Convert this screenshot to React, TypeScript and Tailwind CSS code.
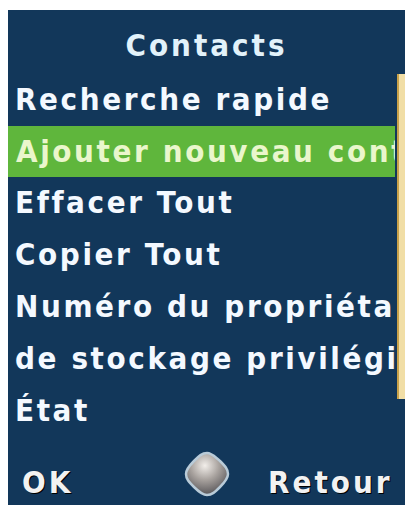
const items = [
  'Recherche rapide',
  'Ajouter nouveau contact',
  'Effacer Tout',
  'Copier Tout',
  'Numéro du propriétaire',
  'de stockage privilégié',
  'État',
];

function NavBall() {
  return (
    <svg width="46" height="46" viewBox="0 0 46 46">
      <defs>
        <radialGradient id="ball" cx="0.45" cy="0.3" r="0.75">
          <stop offset="0" stopColor="#f2eeea" />
          <stop offset="0.45" stopColor="#a8a29e" />
          <stop offset="1" stopColor="#4e4c50" />
        </radialGradient>
      </defs>
      <path
        d="M23 2 C28 2 31 6 36 10 C41 15 44 18 44 23 C44 28 40 32 36 36 C31 41 28 44 23 44 C18 44 14 40 10 36 C5 31 2 28 2 23 C2 18 6 14 10 10 C15 5 18 2 23 2 Z"
        fill="url(#ball)"
        stroke="#b9cbd8"
        strokeWidth="2.5"
      />
    </svg>
  );
}

export default function App() {
  return (
    <div className="w-[409px] h-[510px] bg-white pt-[10px] pl-[8px] pr-[4px] pb-[5px] font-['DejaVu_Sans_Condensed','DejaVu_Sans',sans-serif] font-bold">
      <div className="h-full bg-[#12375a] flex flex-col">
        {/* titre */}
        <div className="h-[65px] pt-[6px] flex items-center justify-center text-[31px] tracking-[3px] text-[#e2f2fa]">
          Contacts
        </div>
        <div className="flex">
          <div className="flex-1 min-w-0 overflow-hidden">
            {items.map((t, i) => (
              <div
                key={t}
                className={
                  i === 1
                    ? 'h-[51px] flex items-center pl-[8px] whitespace-nowrap overflow-hidden bg-[#5fb63c] text-[#eaf6cc] text-[31px] tracking-[2.6px]'
                    : 'h-[52px] flex items-center pl-[7px] whitespace-nowrap overflow-hidden text-[#f4f9ff] text-[31px] tracking-[2.6px]'
                }
              >
                {t}
              </div>
            ))}
          </div>
          <div className="w-[10px] pl-[2px] flex flex-col">
            <div className="h-[325px] bg-[#f1dea6] border-l-2 border-[#c9a24a]"></div>
          </div>
        </div>
        {/* touches */}
        <div className="flex-1 grid grid-cols-3 items-center px-[14px] text-[31px] tracking-[3px] text-[#f2f2f2] [text-shadow:1px_1px_0_#000]">
          <span className="mt-[22px]">OK</span>
          <span className="mt-[6px] flex justify-center"><NavBall /></span>
          <span className="mt-[22px] text-right">Retour</span>
        </div>
      </div>
    </div>
  );
}
